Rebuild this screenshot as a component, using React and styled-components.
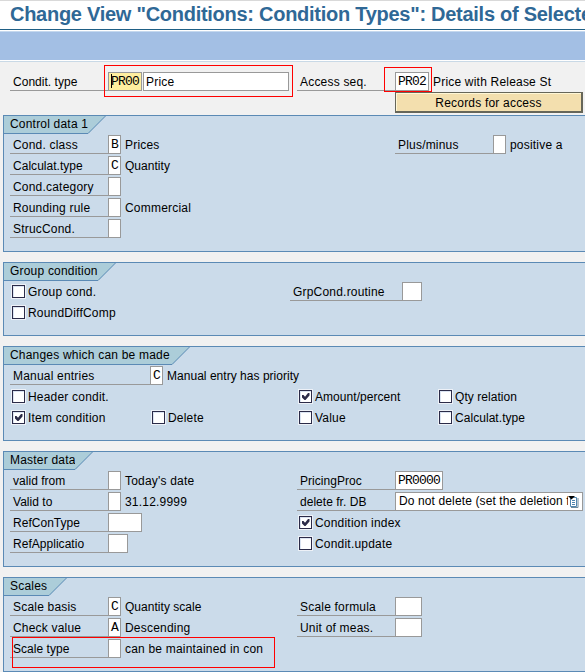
import React from 'react';
import styled, { createGlobalStyle } from 'styled-components';

const GlobalStyle = createGlobalStyle`
    * {
        box-sizing: border-box;
    }
    body {
        margin: 0;
        background: #f1f1f1;
        color: #000;
        font: 12px/18px "Liberation Sans", Arial, sans-serif;
        letter-spacing: .2px;
        overflow: hidden;
    }
`;

const Field = ({ label, labelWidth = 98, width = 13, value, text, active, tight, tightText, children }) => (
    <Cell>
        <Label $width={labelWidth} $tight={tight}>{label}</Label>
        <Input $width={width} $active={active}>
            {active && <Cursor />}
            {value}
        </Input>
        {children}
        {text && <Description $tight={tightText}>{text}</Description>}
    </Cell>
);

const Check = ({ label, checked, tight }) => (
    <Cell>
        <Box>
            {checked && (
                <svg width="9" height="9" viewBox="0 0 9 9">
                    <path d="M1 3 H2.5 L4 4.8 L7 1 H8.5 V3.5 L4.5 8 H3.5 L1 5.5 Z" fill="#2b2b48" />
                </svg>
            )}
        </Box>
        <CheckLabel $tight={tight}>{label}</CheckLabel>
    </Cell>
);

const Group = ({ title, tab, height, children }) => (
    <Panel $height={height}>
        <TabRow>
            <Tab $width={tab}>{title}</Tab>
            <svg width="18" height="18" viewBox="0 0 18 18">
                <path d="M0 0 H17.5 L0.5 17.5 H0 Z" fill="#accdd9" />
                <path d="M17.5 0 L0 17.5" stroke="#5b8ab5" fill="none" />
            </svg>
        </TabRow>
        <Rows>{children}</Rows>
    </Panel>
);

const ListIcon = () => (
    <svg width="11" height="13" viewBox="0 0 11 13">
        <path d="M2.5 2.5 H8.5 V11.5 H2.5 Z" fill="#fff" stroke="#4f86b0" />
        <path d="M10 3 V12.5 H3" fill="none" stroke="#6f8a9b" />
        <path d="M4 5.5 H7 M4 7.5 H7 M4 9.5 H7" stroke="#4f86b0" />
        <path d="M0 1 H7 L3.5 4.5 Z" fill="#000" />
    </svg>
);

const App = () => {
    return (
        <Screen>
            <GlobalStyle />
            <Title>Change View "Conditions: Condition Types": Details of Selected</Title>
            <Toolbar />
            <Head>
                <Row>
                    <Field label="Condit. type" tight width={34} value="PR00" active>
                        <NameInput>Price</NameInput>
                    </Field>
                    <Field label="Access seq." width={34} value="PR02" text="Price with Release St" />
                </Row>
                <Button>Records for access</Button>
            </Head>
            <Groups>
                <Group title="Control data 1" tab={84} height={137}>
                    <Row $cols="385px 1fr">
                        <Field label="Cond. class" value="B" text="Prices" />
                        <Field label="Plus/minus" text="positive a" />
                    </Row>
                    <Row>
                        <Field label="Calculat.type" tight value="C" text="Quantity" tightText />
                    </Row>
                    <Row>
                        <Field label="Cond.category" />
                    </Row>
                    <Row>
                        <Field label="Rounding rule" text="Commercial" />
                    </Row>
                    <Row>
                        <Field label="StrucCond." />
                    </Row>
                </Group>
                <Group title="Group condition" tab={94} height={74}>
                    <Row $cols="280px 1fr">
                        <Check label="Group cond." />
                        <Field label="GrpCond.routine" labelWidth={112} width={20} />
                    </Row>
                    <Row>
                        <Check label="RoundDiffComp" />
                    </Row>
                </Group>
                <Group title="Changes which can be made" tab={168} height={95}>
                    <Row $cols="1fr">
                        <Field label="Manual entries" labelWidth={140} value="C" text="Manual entry has priority" tightText />
                    </Row>
                    <Row $cols="287px 140px 1fr">
                        <Check label="Header condit." />
                        <Check label="Amount/percent" checked tight />
                        <Check label="Qty relation" tight />
                    </Row>
                    <Row $cols="140px 147px 140px 1fr">
                        <Check label="Item condition" checked />
                        <Check label="Delete" />
                        <Check label="Value" />
                        <Check label="Calculat.type" tight />
                    </Row>
                </Group>
                <Group title="Master data" tab={71} height={116}>
                    <Row>
                        <Field label="valid from" tight text="Today's date" />
                        <Field label="PricingProc" tight width={48} value="PR0000" />
                    </Row>
                    <Row>
                        <Field label="Valid to" tight text="31.12.9999" />
                        <Cell>
                            <Label $width={98} $tight>delete fr. DB</Label>
                            <Select>
                                <SelectText>Do not delete (set the deletion flag)</SelectText>
                                <ListIcon />
                            </Select>
                        </Cell>
                    </Row>
                    <Row>
                        <Field label="RefConType" tight width={34} />
                        <Check label="Condition index" checked />
                    </Row>
                    <Row>
                        <Field label="RefApplicatio" tight width={20} />
                        <Check label="Condit.update" />
                    </Row>
                </Group>
                <Group title="Scales" tab={45} height={95}>
                    <Row>
                        <Field label="Scale basis" value="C" text="Quantity scale" tightText />
                        <Field label="Scale formula" width={27} />
                    </Row>
                    <Row>
                        <Field label="Check value" value="A" text="Descending" />
                        <Field label="Unit of meas." width={27} />
                    </Row>
                    <Row>
                        <Field label="Scale type" tight text="can be maintained in con" />
                    </Row>
                </Group>
            </Groups>
            <Mark $x={104} $y={65} $w={189} $h={32} />
            <Mark $x={384} $y={67} $w={48} $h={25} />
            <Mark $x={12} $y={637} $w={263} $h={31} />
        </Screen>
    );
}

const Screen = styled.div`
    position: relative;
    width: 585px;
    height: 672px;
    overflow: hidden;
    white-space: nowrap;
`;

const Title = styled.h1`
    height: 30px;
    margin: 0;
    padding-left: 10px;
    border-top: 1px solid #d9d9d9;
    border-bottom: 1px solid #1f5f85;
    background: #fff;
    color: #2f6896;
    font-size: 20px;
    line-height: 27px;
    letter-spacing: -.27px;
    overflow: hidden;
`;

const Toolbar = styled.div`
    height: 32px;
    background: #a3bfe4;
    border-top: 1px solid #fff;
    border-bottom: 1px solid #c9d9e6;
    box-shadow: inset 0 1px #c5d8ee, inset 0 -1px #fff;
`;

const Head = styled.div`
    height: 53px;
    padding: 10px 0 0 10px;
`;

const Row = styled.div`
    display: grid;
    grid-template-columns: ${props => props.$cols || '287px 1fr'};
    height: 19px;
`;

const Cell = styled.div`
    display: flex;
    height: 19px;
    min-width: 0;
`;

const Label = styled.span`
    flex: none;
    width: ${props => props.$width}px;
    padding-left: 3px;
    line-height: 21px;
    letter-spacing: ${props => props.$tight ? '.03px' : '.2px'};
    border-bottom: 1px solid #999;
`;

const Input = styled.div`
    flex: none;
    display: flex;
    width: ${props => props.$width}px;
    height: 19px;
    padding-left: 2px;
    border: 1px solid #999;
    background: ${props => props.$active ? '#ffee9f' : '#fff'};
    font: 13px/17px "Liberation Mono", monospace;
    letter-spacing: -.8px;
`;

const Cursor = styled.i`
    width: 1px;
    height: 14px;
    margin: 1px -1px 0 0;
    background: #000;
`;

const NameInput = styled.div`
    width: 146px;
    margin-left: 1px;
    padding-left: 2px;
    border: 1px solid #999;
    background: #fff;
    line-height: 19px;
`;

const Description = styled.span`
    padding-left: 4px;
    line-height: 21px;
    letter-spacing: ${props => props.$tight ? '.03px' : '.2px'};
`;

const Button = styled.button`
    display: block;
    width: 188px;
    height: 21px;
    margin: 1px 0 0 385px;
    padding: 1px 0 0;
    border: 1px solid #666659;
    border-width: 1px 2px 2px 1px;
    box-shadow: inset 1px 1px #fff7d6;
    background: #f3dfae;
    color: #000;
    font: inherit;
    letter-spacing: .2px;
`;

const Groups = styled.div`
    display: flex;
    flex-direction: column;
    gap: 10px;
    padding-left: 3px;
`;

const Panel = styled.section`
    height: ${props => props.$height}px;
    border: 1px solid #5b8ab5;
    border-right: none;
    background: #cbdbea;
`;

const TabRow = styled.div`
    display: flex;
    height: 18px;
`;

const Tab = styled.div`
    width: ${props => props.$width}px;
    padding-left: 6px;
    line-height: 17px;
    border-bottom: 1px solid #5b8ab5;
    background: #accdd9;
`;

const Rows = styled.div`
    display: grid;
    gap: 2px;
    padding: 1px 0 0 6px;
`;

const Box = styled.span`
    display: flex;
    align-items: center;
    justify-content: center;
    flex: none;
    width: 13px;
    height: 13px;
    margin: 3px 3px 0 2px;
    border: 1px solid #2b2b48;
    box-shadow: 0 0 0 1px #edf1f7, inset 1px 1px #dbe4f2;
    background: #fff;
`;

const CheckLabel = styled.span`
    line-height: 21px;
    letter-spacing: ${props => props.$tight ? '.05px' : '.2px'};
`;

const Select = styled(Input)`
    width: 188px;
    align-items: center;
    padding: 0 3px;
    font: inherit;
    letter-spacing: .12px;

    svg {
        flex: none;
    }
`;

const SelectText = styled.span`
    flex: 1;
    min-width: 0;
    overflow: hidden;
    line-height: 17px;
`;

const Mark = styled.div`
    position: absolute;
    left: ${props => props.$x}px;
    top: ${props => props.$y}px;
    width: ${props => props.$w}px;
    height: ${props => props.$h}px;
    border: 1px solid #f00;
`;

export default App;
